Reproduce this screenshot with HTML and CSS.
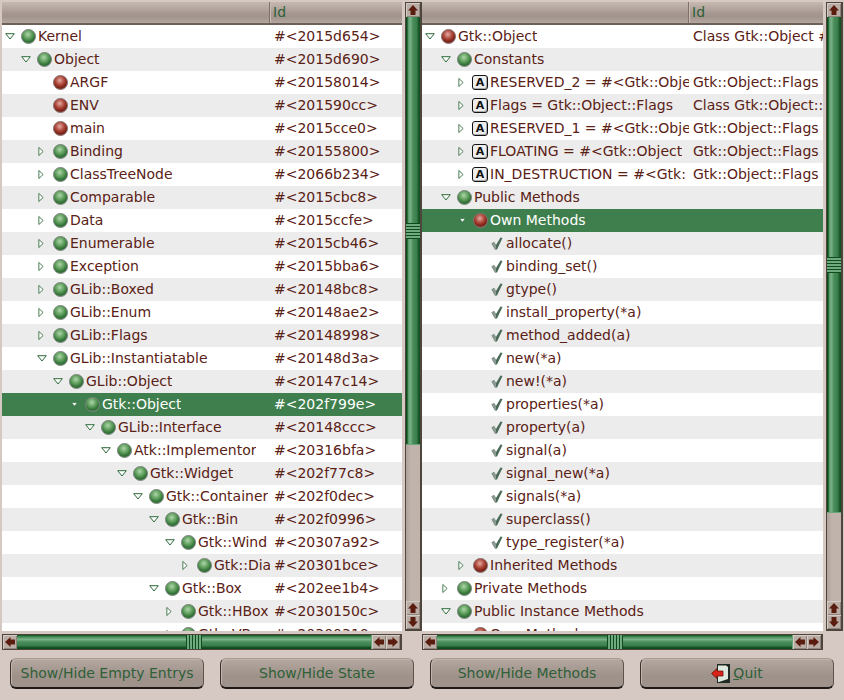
FILE: index.html

```html
<!DOCTYPE html>
<html lang="en">
<head>
    <meta charset="UTF-8">
    <title>Object Browser</title>
    <link rel="stylesheet" href="styles.css">
</head>
<body>
<svg class="defs" width="0" height="0">
    <defs>
        <radialGradient id="gradGreen" cx="45%" cy="35%" r="65%">
            <stop offset="0" stop-color="#aed6a9"/>
            <stop offset="0.5" stop-color="#5c9c5a"/>
            <stop offset="0.85" stop-color="#2d6b33"/>
            <stop offset="1" stop-color="#4f8a54"/>
        </radialGradient>
        <radialGradient id="gradRed" cx="45%" cy="35%" r="65%">
            <stop offset="0" stop-color="#e2aca4"/>
            <stop offset="0.5" stop-color="#ad4436"/>
            <stop offset="0.85" stop-color="#741e15"/>
            <stop offset="1" stop-color="#9a5248"/>
        </radialGradient>
        <symbol id="green" viewBox="0 0 15 15">
            <circle cx="7.5" cy="7.5" r="7" fill="url(#gradGreen)" stroke="#7d877f"/>
        </symbol>
        <symbol id="red" viewBox="0 0 15 15">
            <circle cx="7.5" cy="7.5" r="7" fill="url(#gradRed)" stroke="#877472"/>
        </symbol>
        <symbol id="open" viewBox="0 0 10 7">
            <path d="M.7 .7H9.3L5 6Z" fill="#fff" stroke="#2f6a3c"/>
        </symbol>
        <symbol id="closed" viewBox="0 0 7 11">
            <path d="M1 .8V10.2L6 5.5Z" fill="#fff" stroke="#2f6a3c"/>
        </symbol>
        <symbol id="check" viewBox="0 0 12 13">
            <path d="M.5 6.5L3 5L5 8L9.5 .5L11.5 1L6 12.5H4Z" fill="#4a6a58"/>
            <path d="M3 5L5 8L5 12.5H4L.5 6.5Z" fill="#8b9a90"/>
        </symbol>
        <symbol id="up" viewBox="0 0 12 12">
            <path d="M6 1L11 6.5H8.5V11H3.5V6.5H1Z" fill="#5a1c0e"/>
        </symbol>
        <symbol id="quit" viewBox="0 0 20 19">
            <path d="M6 0H19V19H6Z" fill="#1f2a24"/>
            <path d="M7 1.5H15L17 3V15L8 18H7Z" fill="#dfe8df"/>
            <path d="M.5 9.5L6 4.5V7H12V12H6V14.5Z" fill="#d8231a" stroke="#6a1410" stroke-width=".8"/>
        </symbol>
    </defs>
</svg>

<div class="panes">
    <div class="side">
        <div class="column">
            <div class="pane">
                <div class="head"><span class="head-name"></span><span class="head-id">Id</span></div>
                <div class="tree">
                    <div class="row"><div class="name d0"><svg class="arr-open"><use href="#open"/></svg><svg class="ball"><use href="#green"/></svg><span>Kernel</span></div><div class="id">#&lt;2015d654&gt;</div></div>
                    <div class="row"><div class="name d1"><svg class="arr-open"><use href="#open"/></svg><svg class="ball"><use href="#green"/></svg><span>Object</span></div><div class="id">#&lt;2015d690&gt;</div></div>
                    <div class="row"><div class="name d2"><i class="arr-none"></i><svg class="ball"><use href="#red"/></svg><span>ARGF</span></div><div class="id">#&lt;20158014&gt;</div></div>
                    <div class="row"><div class="name d2"><i class="arr-none"></i><svg class="ball"><use href="#red"/></svg><span>ENV</span></div><div class="id">#&lt;201590cc&gt;</div></div>
                    <div class="row"><div class="name d2"><i class="arr-none"></i><svg class="ball"><use href="#red"/></svg><span>main</span></div><div class="id">#&lt;2015cce0&gt;</div></div>
                    <div class="row"><div class="name d2"><svg class="arr-closed"><use href="#closed"/></svg><svg class="ball"><use href="#green"/></svg><span>Binding</span></div><div class="id">#&lt;20155800&gt;</div></div>
                    <div class="row"><div class="name d2"><svg class="arr-closed"><use href="#closed"/></svg><svg class="ball"><use href="#green"/></svg><span>ClassTreeNode</span></div><div class="id">#&lt;2066b234&gt;</div></div>
                    <div class="row"><div class="name d2"><svg class="arr-closed"><use href="#closed"/></svg><svg class="ball"><use href="#green"/></svg><span>Comparable</span></div><div class="id">#&lt;2015cbc8&gt;</div></div>
                    <div class="row"><div class="name d2"><svg class="arr-closed"><use href="#closed"/></svg><svg class="ball"><use href="#green"/></svg><span>Data</span></div><div class="id">#&lt;2015ccfe&gt;</div></div>
                    <div class="row"><div class="name d2"><svg class="arr-closed"><use href="#closed"/></svg><svg class="ball"><use href="#green"/></svg><span>Enumerable</span></div><div class="id">#&lt;2015cb46&gt;</div></div>
                    <div class="row"><div class="name d2"><svg class="arr-closed"><use href="#closed"/></svg><svg class="ball"><use href="#green"/></svg><span>Exception</span></div><div class="id">#&lt;2015bba6&gt;</div></div>
                    <div class="row"><div class="name d2"><svg class="arr-closed"><use href="#closed"/></svg><svg class="ball"><use href="#green"/></svg><span>GLib::Boxed</span></div><div class="id">#&lt;20148bc8&gt;</div></div>
                    <div class="row"><div class="name d2"><svg class="arr-closed"><use href="#closed"/></svg><svg class="ball"><use href="#green"/></svg><span>GLib::Enum</span></div><div class="id">#&lt;20148ae2&gt;</div></div>
                    <div class="row"><div class="name d2"><svg class="arr-closed"><use href="#closed"/></svg><svg class="ball"><use href="#green"/></svg><span>GLib::Flags</span></div><div class="id">#&lt;20148998&gt;</div></div>
                    <div class="row"><div class="name d2"><svg class="arr-open"><use href="#open"/></svg><svg class="ball"><use href="#green"/></svg><span>GLib::Instantiatable</span></div><div class="id">#&lt;20148d3a&gt;</div></div>
                    <div class="row"><div class="name d3"><svg class="arr-open"><use href="#open"/></svg><svg class="ball"><use href="#green"/></svg><span>GLib::Object</span></div><div class="id">#&lt;20147c14&gt;</div></div>
                    <div class="row selected"><div class="name d4"><svg class="arr-open"><use href="#open"/></svg><svg class="ball"><use href="#green"/></svg><span>Gtk::Object</span></div><div class="id">#&lt;202f799e&gt;</div></div>
                    <div class="row"><div class="name d5"><svg class="arr-open"><use href="#open"/></svg><svg class="ball"><use href="#green"/></svg><span>GLib::Interface</span></div><div class="id">#&lt;20148ccc&gt;</div></div>
                    <div class="row"><div class="name d6"><svg class="arr-open"><use href="#open"/></svg><svg class="ball"><use href="#green"/></svg><span>Atk::Implementor</span></div><div class="id">#&lt;20316bfa&gt;</div></div>
                    <div class="row"><div class="name d7"><svg class="arr-open"><use href="#open"/></svg><svg class="ball"><use href="#green"/></svg><span>Gtk::Widget</span></div><div class="id">#&lt;202f77c8&gt;</div></div>
                    <div class="row"><div class="name d8"><svg class="arr-open"><use href="#open"/></svg><svg class="ball"><use href="#green"/></svg><span>Gtk::Container</span></div><div class="id">#&lt;202f0dec&gt;</div></div>
                    <div class="row"><div class="name d9"><svg class="arr-open"><use href="#open"/></svg><svg class="ball"><use href="#green"/></svg><span>Gtk::Bin</span></div><div class="id">#&lt;202f0996&gt;</div></div>
                    <div class="row"><div class="name d10"><svg class="arr-open"><use href="#open"/></svg><svg class="ball"><use href="#green"/></svg><span>Gtk::Wind</span></div><div class="id">#&lt;20307a92&gt;</div></div>
                    <div class="row"><div class="name d11"><svg class="arr-closed"><use href="#closed"/></svg><svg class="ball"><use href="#green"/></svg><span>Gtk::Dia</span></div><div class="id">#&lt;20301bce&gt;</div></div>
                    <div class="row"><div class="name d9"><svg class="arr-open"><use href="#open"/></svg><svg class="ball"><use href="#green"/></svg><span>Gtk::Box</span></div><div class="id">#&lt;202ee1b4&gt;</div></div>
                    <div class="row"><div class="name d10"><svg class="arr-closed"><use href="#closed"/></svg><svg class="ball"><use href="#green"/></svg><span>Gtk::HBox</span></div><div class="id">#&lt;2030150c&gt;</div></div>
                    <div class="row"><div class="name d10"><svg class="arr-closed"><use href="#closed"/></svg><svg class="ball"><use href="#green"/></svg><span>Gtk::VBox</span></div><div class="id">#&lt;20300310&gt;</div></div>
                </div>
            </div>
            <div class="hscroll">
                <div class="sbtn"><svg class="left"><use href="#up"/></svg></div>
                <div class="hthumb"><div class="hgrip"></div></div>
                <div class="sbtn"><svg class="left"><use href="#up"/></svg></div>
                <div class="sbtn"><svg class="right"><use href="#up"/></svg></div>
            </div>
        </div>
        <div class="vscroll">
            <div class="sbtn"><svg><use href="#up"/></svg></div>
            <div class="vtrack"><div class="vthumb thumb-left"><div class="vgrip"></div></div></div>
            <div class="sbtn"><svg><use href="#up"/></svg></div>
            <div class="sbtn"><svg class="down"><use href="#up"/></svg></div>
        </div>
    </div>

    <div class="side">
        <div class="column">
            <div class="pane">
                <div class="head"><span class="head-name wide"></span><span class="head-id">Id</span></div>
                <div class="tree">
                    <div class="row"><div class="name wide d0"><svg class="arr-open"><use href="#open"/></svg><svg class="ball"><use href="#red"/></svg><span>Gtk::Object</span></div><div class="id">Class Gtk::Object #</div></div>
                    <div class="row"><div class="name wide d1"><svg class="arr-open"><use href="#open"/></svg><svg class="ball"><use href="#green"/></svg><span>Constants</span></div><div class="id"></div></div>
                    <div class="row"><div class="name wide d2"><svg class="arr-closed"><use href="#closed"/></svg><b class="const">A</b><span>RESERVED_2 = #&lt;Gtk::Obje</span></div><div class="id">Gtk::Object::Flags</div></div>
                    <div class="row"><div class="name wide d2"><svg class="arr-closed"><use href="#closed"/></svg><b class="const">A</b><span>Flags = Gtk::Object::Flags</span></div><div class="id">Class Gtk::Object::</div></div>
                    <div class="row"><div class="name wide d2"><svg class="arr-closed"><use href="#closed"/></svg><b class="const">A</b><span>RESERVED_1 = #&lt;Gtk::Obje</span></div><div class="id">Gtk::Object::Flags</div></div>
                    <div class="row"><div class="name wide d2"><svg class="arr-closed"><use href="#closed"/></svg><b class="const">A</b><span>FLOATING = #&lt;Gtk::Object</span></div><div class="id">Gtk::Object::Flags</div></div>
                    <div class="row"><div class="name wide d2"><svg class="arr-closed"><use href="#closed"/></svg><b class="const">A</b><span>IN_DESTRUCTION = #&lt;Gtk:</span></div><div class="id">Gtk::Object::Flags</div></div>
                    <div class="row"><div class="name wide d1"><svg class="arr-open"><use href="#open"/></svg><svg class="ball"><use href="#green"/></svg><span>Public Methods</span></div><div class="id"></div></div>
                    <div class="row selected"><div class="name wide d2"><svg class="arr-open"><use href="#open"/></svg><svg class="ball"><use href="#red"/></svg><span>Own Methods</span></div><div class="id"></div></div>
                    <div class="row"><div class="name wide d3"><i class="arr-none"></i><svg class="tick"><use href="#check"/></svg><span>allocate()</span></div><div class="id"></div></div>
                    <div class="row"><div class="name wide d3"><i class="arr-none"></i><svg class="tick"><use href="#check"/></svg><span>binding_set()</span></div><div class="id"></div></div>
                    <div class="row"><div class="name wide d3"><i class="arr-none"></i><svg class="tick"><use href="#check"/></svg><span>gtype()</span></div><div class="id"></div></div>
                    <div class="row"><div class="name wide d3"><i class="arr-none"></i><svg class="tick"><use href="#check"/></svg><span>install_property(*a)</span></div><div class="id"></div></div>
                    <div class="row"><div class="name wide d3"><i class="arr-none"></i><svg class="tick"><use href="#check"/></svg><span>method_added(a)</span></div><div class="id"></div></div>
                    <div class="row"><div class="name wide d3"><i class="arr-none"></i><svg class="tick"><use href="#check"/></svg><span>new(*a)</span></div><div class="id"></div></div>
                    <div class="row"><div class="name wide d3"><i class="arr-none"></i><svg class="tick"><use href="#check"/></svg><span>new!(*a)</span></div><div class="id"></div></div>
                    <div class="row"><div class="name wide d3"><i class="arr-none"></i><svg class="tick"><use href="#check"/></svg><span>properties(*a)</span></div><div class="id"></div></div>
                    <div class="row"><div class="name wide d3"><i class="arr-none"></i><svg class="tick"><use href="#check"/></svg><span>property(a)</span></div><div class="id"></div></div>
                    <div class="row"><div class="name wide d3"><i class="arr-none"></i><svg class="tick"><use href="#check"/></svg><span>signal(a)</span></div><div class="id"></div></div>
                    <div class="row"><div class="name wide d3"><i class="arr-none"></i><svg class="tick"><use href="#check"/></svg><span>signal_new(*a)</span></div><div class="id"></div></div>
                    <div class="row"><div class="name wide d3"><i class="arr-none"></i><svg class="tick"><use href="#check"/></svg><span>signals(*a)</span></div><div class="id"></div></div>
                    <div class="row"><div class="name wide d3"><i class="arr-none"></i><svg class="tick"><use href="#check"/></svg><span>superclass()</span></div><div class="id"></div></div>
                    <div class="row"><div class="name wide d3"><i class="arr-none"></i><svg class="tick"><use href="#check"/></svg><span>type_register(*a)</span></div><div class="id"></div></div>
                    <div class="row"><div class="name wide d2"><svg class="arr-closed"><use href="#closed"/></svg><svg class="ball"><use href="#red"/></svg><span>Inherited Methods</span></div><div class="id"></div></div>
                    <div class="row"><div class="name wide d1"><svg class="arr-closed"><use href="#closed"/></svg><svg class="ball"><use href="#green"/></svg><span>Private Methods</span></div><div class="id"></div></div>
                    <div class="row"><div class="name wide d1"><svg class="arr-open"><use href="#open"/></svg><svg class="ball"><use href="#green"/></svg><span>Public Instance Methods</span></div><div class="id"></div></div>
                    <div class="row"><div class="name wide d2"><svg class="arr-open"><use href="#open"/></svg><svg class="ball"><use href="#red"/></svg><span>Own Methods</span></div><div class="id"></div></div>
                </div>
            </div>
            <div class="hscroll">
                <div class="sbtn"><svg class="left"><use href="#up"/></svg></div>
                <div class="hthumb"><div class="hgrip"></div></div>
                <div class="sbtn"><svg class="left"><use href="#up"/></svg></div>
                <div class="sbtn"><svg class="right"><use href="#up"/></svg></div>
            </div>
        </div>
        <div class="vscroll">
            <div class="sbtn"><svg><use href="#up"/></svg></div>
            <div class="vtrack"><div class="vthumb thumb-right"><div class="vgrip"></div></div></div>
            <div class="sbtn"><svg><use href="#up"/></svg></div>
            <div class="sbtn"><svg class="down"><use href="#up"/></svg></div>
        </div>
    </div>
</div>

<div class="buttons">
    <button>Show/Hide Empty Entrys</button>
    <button>Show/Hide State</button>
    <button>Show/Hide Methods</button>
    <button><svg class="quit-icon"><use href="#quit"/></svg><u>Q</u>uit</button>
</div>
</body>
</html>
```

FILE: styles.css

```css
html, body { margin: 0; height: 700px; overflow: hidden; }
body { background: #d6c9c3; font-family: "DejaVu Sans", sans-serif; font-size: 14px; color: #5a2115; }
.defs { position: absolute; }

.panes { display: flex; padding: 2px 0 0 2px; }
.side { display: flex; width: 420px; }
.column { width: 401px; margin-right: 3px; }

/* list */
.pane { background: #fff; height: 629px; display: flex; flex-direction: column; }
.head { display: flex; height: 23px; box-sizing: border-box; flex: none; border-bottom: 2px solid #6d6058; background: linear-gradient(#c6b9b0, #a69891 55%, #a2948d 70%, #b3a69e); color: #2f6038; line-height: 21px; }
.head-name { width: 267px; border-right: 1px solid #7d7068; box-shadow: 1px 0 0 #c9bdb5; }
.head-name.wide { width: 266px; }
.head-id { padding-left: 3px; }
.tree { flex: 1; overflow: hidden; }

.row { display: flex; height: 23px; line-height: 23px; white-space: nowrap; }
.row:nth-child(even) { background: #ececec; }
.row.selected { background: #3f7f4e; color: #fff; }
.name { width: 268px; flex: none; overflow: hidden; display: flex; align-items: center; box-sizing: border-box; }
.name.wide { width: 267px; }
.name span { margin-left: 2px; overflow: hidden; min-width: 0; }
.id { padding-left: 4px; overflow: hidden; }

.d0 { padding-left: 0; }
.d1 { padding-left: 16px; }
.d2 { padding-left: 32px; }
.d3 { padding-left: 48px; }
.d4 { padding-left: 64px; }
.d5 { padding-left: 80px; }
.d6 { padding-left: 96px; }
.d7 { padding-left: 112px; }
.d8 { padding-left: 128px; }
.d9 { padding-left: 144px; }
.d10 { padding-left: 160px; }
.d11 { padding-left: 176px; }

/* tree icons */
.arr-open { width: 10px; height: 7px; margin: 0 5px 0 3px; flex: none; }
.arr-closed { width: 6px; height: 11px; margin: 0 8px 0 4px; flex: none; }
.arr-none { width: 18px; flex: none; }
.selected .arr-open { width: 7px; height: 5px; margin: 0 6px 0 5px; }
.ball { width: 15px; height: 15px; flex: none; margin: 0 0 0 1px; }
.tick { width: 12px; height: 13px; flex: none; margin: 0 1px 0 3px; }
.const { width: 14px; height: 13px; flex: none; border: 1px solid #111; border-radius: 3px; background: #eee; color: #111; font-size: 11px; line-height: 13px; text-align: center; box-shadow: inset -1px -1px 0 #aaa; }

/* scrollbars */
.sbtn { width: 14px; height: 14px; flex: none; background: #b9ada6; box-shadow: inset 1px 1px 0 #d5cbc5, inset -1px -1px 0 #8f837c; display: flex; align-items: center; justify-content: center; }
.sbtn svg { width: 12px; height: 12px; }
.sbtn .down { transform: rotate(180deg); }
.sbtn .left { transform: rotate(-90deg); }
.sbtn .right { transform: rotate(90deg); }

.vscroll { width: 14px; height: 626px; display: flex; flex-direction: column; border: 1px solid #4e453d; border-width: 1px 2px 2px 1px; margin-bottom: 1px; background: #4e453d; }
.vtrack { flex: 1; background: linear-gradient(90deg, #aea29b, #bfb3ac 35%); display: flex; flex-direction: column; }
.vthumb { display: flex; flex-direction: column; justify-content: center; box-sizing: border-box; background: linear-gradient(90deg, #0f4a1b, #0f4a1b 8%, #4f9561 14%, #7ab189 30%, #4a8d5b 50%, #3a7f4d 75%, #1a5a28 90%, #0f4a1b); border-bottom: 1px solid #6da57a; }
.thumb-left { height: 428px; }
.thumb-right { height: 496px; }
.vgrip { height: 16px; background: repeating-linear-gradient(#0f4a1b 0 1px, #6fa97f 1px 3px); }

.hscroll { display: flex; height: 16px; margin-top: 3px; box-sizing: border-box; border: 1px solid #4e453d; border-width: 1px 2px 1px 1px; background: #4e453d; }
.hthumb { flex: 1; display: flex; justify-content: center; background: linear-gradient(#0f4a1b, #3f8a52 12%, #7ab189 32%, #4a8d5b 50%, #3a7f4d 75%, #0f4a1b 92%); border-right: 1px solid #6da57a; }
.hgrip { width: 16px; background: repeating-linear-gradient(90deg, #0f4a1b 0 1px, #6fa97f 1px 3px); }

/* bottom buttons */
.buttons { display: grid; grid-template-columns: repeat(4, 194px); gap: 16px; padding: 8px 10px; }
button { height: 31px; padding: 0; font: inherit; color: #2f6038; border: 1px solid #a89b94; border-left-color: #3a302b; border-right-color: #5f534c; border-bottom: 2px solid #1f1a17; border-radius: 6px; background: linear-gradient(#b4a79f, #9f928b 60%, #a0938c); box-shadow: inset 1px 1px 0 #c0b4ad; display: flex; align-items: center; justify-content: center; }
.quit-icon { width: 20px; height: 19px; margin-right: 2px; }
```
